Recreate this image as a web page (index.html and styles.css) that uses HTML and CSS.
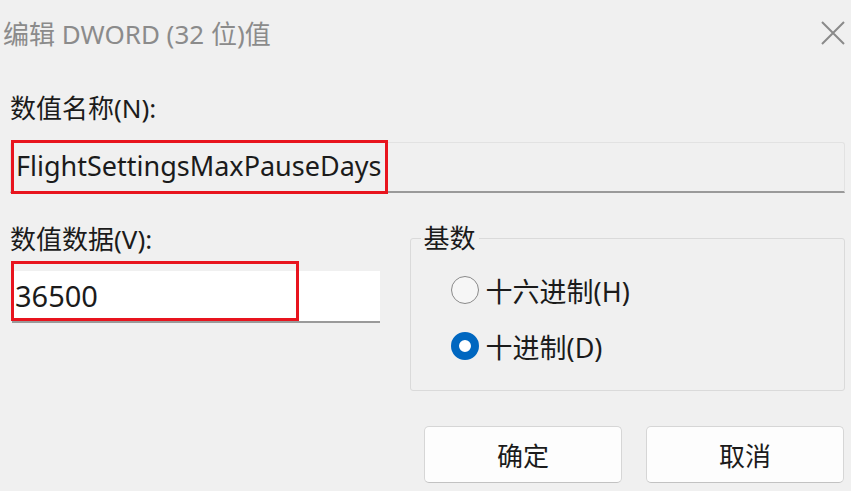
FILE: index.html
```html
<!DOCTYPE html>
<html lang="zh-CN">
<head>
<meta charset="utf-8">
<title>编辑 DWORD (32 位)值</title>
<link rel="stylesheet" href="styles.css">
</head>
<body>
<div class="dialog">
  <div class="titlebar">
    <span class="title">编辑 DWORD (32 位)值</span>
    <svg class="close" width="26" height="26" viewBox="0 0 26 26"><path d="M2 2 L24 24 M24 2 L2 24" stroke="#8a8a8a" stroke-width="2" fill="none"/></svg>
  </div>
  <div class="content">
    <div class="label name-label">数值名称(N):</div>
    <div class="name-field">
      <span class="name-text">FlightSettingsMaxPauseDays</span>
      <div class="mark mark-name"></div>
    </div>
    <div class="row">
      <div class="left">
        <div class="label data-label">数值数据(V):</div>
        <div class="data-field">
          <span class="data-text">36500</span>
          <div class="mark mark-data"></div>
        </div>
      </div>
      <div class="group">
        <div class="legend">基数</div>
        <div class="radio-row">
          <span class="radio"></span><span class="radio-text">十六进制(H)</span>
        </div>
        <div class="radio-row">
          <span class="radio checked"></span><span class="radio-text">十进制(D)</span>
        </div>
      </div>
    </div>
    <div class="buttons">
      <div class="btn">确定</div>
      <div class="btn">取消</div>
    </div>
  </div>
</div>
</body>
</html>
```

FILE: styles.css
```css
html, body {
  margin: 0;
  padding: 0;
  background: #f0f0f0;
}
body {
  width: 851px;
  height: 491px;
  overflow: hidden;
  font-family: "Noto Sans", "Noto Sans CJK SC", sans-serif;
  color: #1b1b1b;
}
.titlebar {
  height: 66px;
  display: flex;
  align-items: center;
  justify-content: space-between;
  padding: 0 5px 0 3px;
  box-sizing: border-box;
}
.title {
  font-size: 26px;
  color: #8b8b8b;
  margin-top: -1px;
}
.content {
  padding: 0 6px 0 10px;
}
.label {
  font-size: 26px;
  line-height: 30px;
}
.name-label {
  margin-top: 27px;
  height: 30px;
}
.name-field {
  position: relative;
  margin-top: 19px;
  height: 48px;
  border: 1px solid #e2e2e2;
  border-bottom: 2px solid #9a9a9a;
  border-radius: 3px 3px 0 0;
  display: flex;
  align-items: center;
  padding-left: 5px;
}
.name-text {
  font-size: 27px;
  margin-top: -3px;
}
.data-text {
  font-size: 29px;
  margin-top: -2px;
}
.mark {
  position: absolute;
  border: 3px solid #e8141e;
  box-sizing: border-box;
}
.mark-name {
  left: 0;
  top: -3px;
  width: 377px;
  height: 54px;
}
.row {
  display: flex;
  margin-top: 32px;
}
.left {
  width: 370px;
}
.data-label {
  margin-top: -1px;
}
.data-field {
  position: relative;
  margin-top: 17px;
  margin-left: 2px;
  height: 50px;
  background: #ffffff;
  border-bottom: 2px solid #9a9a9a;
  display: flex;
  align-items: center;
  padding-left: 3px;
}
.mark-data {
  left: -1px;
  top: -10px;
  width: 288px;
  height: 60px;
}
.group {
  position: relative;
  margin-left: 30px;
  margin-top: 13px;
  width: 436px;
  height: 153px;
  border: 1px solid #dadada;
  border-radius: 3px;
  box-sizing: border-box;
}
.legend {
  position: absolute;
  top: -15px;
  left: 10px;
  padding: 0 3px;
  background: #f0f0f0;
  font-size: 26px;
  line-height: 28px;
}
.radio-row {
  display: flex;
  align-items: center;
  margin-left: 40px;
  height: 56px;
}
.group .radio-row:nth-child(2) {
  margin-top: 23px;
}
.radio {
  width: 28px;
  height: 28px;
  border-radius: 50%;
  border: 1.5px solid #8a8a8a;
  box-sizing: border-box;
  background: #f6f6f6;
  margin-right: 7px;
}
.radio.checked {
  border: 8px solid #0067c0;
  background: #ffffff;
}
.radio-text {
  font-size: 27px;
}
.buttons {
  display: flex;
  justify-content: flex-end;
  gap: 24px;
  margin-top: 35px;
  padding-right: 1px;
}
.btn {
  width: 198px;
  height: 57px;
  box-sizing: border-box;
  background: #fdfdfd;
  border: 1px solid #d6d6d6;
  border-bottom-color: #c2c2c2;
  border-radius: 5px;
  display: flex;
  align-items: center;
  justify-content: center;
  font-size: 26px;
}
```
